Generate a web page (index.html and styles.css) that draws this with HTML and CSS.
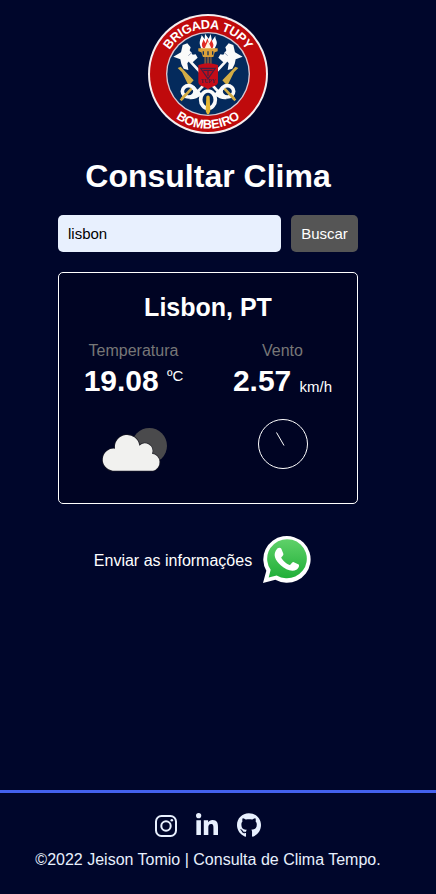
FILE: index.html
```html
<!DOCTYPE html>
<html lang="pt-br">
<head>
<meta charset="utf-8">
<meta name="viewport" content="width=device-width, initial-scale=1">
<title>Consultar Clima</title>
<link rel="stylesheet" href="styles.css">
</head>
<body>
<main class="content">
  <svg class="logo" viewBox="15 18 360 360" role="img" aria-label="Brigada Tupy Bombeiro">
    <defs>
      <path id="arc-top" d="M59 198a136 136 0 0 1 272 0"/>
      <path id="arc-bottom" d="M31 198a164 164 0 0 0 328 0"/>
    </defs>
    <circle cx="195" cy="198" r="180" fill="#f4eef0"/>
    <circle cx="195" cy="198" r="174" fill="#bf0a0c"/>
    <circle cx="195" cy="198" r="126" fill="#d9c9d2"/>
    <circle cx="195" cy="198" r="122" fill="#042a5c"/>
    <text class="logo-text"><textPath href="#arc-top" startOffset="50%" textLength="276">BRIGADA TUPY</textPath></text>
    <text class="logo-text"><textPath href="#arc-bottom" startOffset="50%" textLength="207">BOMBEIRO</textPath></text>
    <path d="M134 152L238 264M256 152L152 264" stroke="#f7f7f7" stroke-width="8"/>
    <path id="axe" d="M91 146l23-13 5-22 14-5 10 12-3 9 9 13 9-1 6 10-15 14-10-5-6 8 3 20-14-4-7-14-3-14z" fill="#fafafa"/>
    <path d="M299 146l-23-13-5-22-14-5-10 12 3 9-9 13-9-1-6 10 15 14 10-5 6 8-3 20 14-4 7-14 3-14z" fill="#fafafa"/>
    <path d="M136 143l11-10M254 143l-11-10" stroke="#9aa6bd" stroke-width="3"/>
    <path d="M104 180l9-4 39 41-15 16-20-40z" fill="#d3ad45"/>
    <path d="M286 180l-9-4-39 41 15 16 20-40z" fill="#d3ad45"/>
    <path d="M171 111c-3-13 3-18 5-30l9 13 1-17 11 15 6-14 4 20 10-14c-1 12 8 15 3 27l-7 15h-37z" fill="#fff"/>
    <path d="M180 120c-8-13 1-17 1-26l7 12 5-15 6 16 8-14c-2 11 9 14 2 27z" fill="#e02b25"/>
    <path d="M185 121l10-22 10 22z" fill="#fff3df"/>
    <path d="M166 121h58v9l-9 3-4 14h-31l-5-14-9-3z" fill="#dca13a"/>
    <path d="M181 130v10M195 130v12M209 130v10" stroke="#12315c" stroke-width="4"/>
    <path d="M184 147h22v22h-22z" fill="#7a5940"/>
    <path d="M191 147v22M200 147v22" stroke="#162c55" stroke-width="3"/>
    <path d="M113 277l36-39M277 277l-36-39" stroke="#d3ad45" stroke-width="8"/>
    <g fill="none" stroke="#fafafa" stroke-width="11">
      <ellipse cx="137" cy="250" rx="19" ry="17"/>
      <ellipse cx="253" cy="250" rx="19" ry="17"/>
      <ellipse cx="195" cy="275" rx="22" ry="26"/>
      <path d="M150 239l22 22M240 239l-22 22M140 268q16 2 32-11M250 268q-16 2-32-11"/>
    </g>
    <path d="M117 272l13-14M273 272l-13-14" stroke="#d3ad45" stroke-width="8"/>
    <path d="M190 266q5-7 10 0l2 43q-7 21-14 0z" fill="#e5b633"/>
    <path d="M166 171q29-10 59 0v52c0 12-24 13-30 22-6-9-29-10-29-22z" fill="#c40c18"/>
    <path d="M173 181h44l-22 31zM181 187h28M195 187v17" fill="none" stroke="#442044" stroke-width="3.5"/>
    <text class="shield-text" x="195" y="224" textLength="45">TUPY</text>
  </svg>

  <h1 class="title">Consultar Clima</h1>

  <form class="search">
    <input class="search-input" type="text" value="lisbon" aria-label="Cidade">
    <button class="search-button" type="button">Buscar</button>
  </form>

  <section class="card">
    <h2 class="city">Lisbon, PT</h2>
    <div class="readings">
      <div class="reading">
        <p class="label">Temperatura</p>
        <p class="value">19.08 <span class="unit unit-top">ºC</span></p>
        <svg class="cloud" viewBox="0 0 240 195" aria-hidden="true">
          <circle cx="163" cy="92" r="53" fill="#4a4a4c"/>
          <path d="M53 167a33 33 0 0 1 7-66a36 36 0 0 1 73-9a23 23 0 0 1 38 24a26 26 0 0 1 3 51z" fill="none" stroke="#1d1d25" stroke-width="5" stroke-opacity=".75"/>
          <path d="M53 167a33 33 0 0 1 7-66a36 36 0 0 1 73-9a23 23 0 0 1 38 24a26 26 0 0 1 3 51z" fill="#f1f1ef"/>
        </svg>
      </div>
      <div class="reading">
        <p class="label">Vento</p>
        <p class="value">2.57 <span class="unit unit-base">km/h</span></p>
        <svg class="compass" viewBox="0 0 50 50" fill="none" stroke="#fff" aria-hidden="true">
          <circle cx="25" cy="25" r="24.5"/>
          <path d="M18.5 13.5l7.5 13"/>
        </svg>
      </div>
    </div>
  </section>

  <div class="share">
    <span class="share-text">Enviar as informações</span>
    <svg class="whatsapp" viewBox="39 29 144 146" preserveAspectRatio="none" aria-hidden="true">
      <defs><linearGradient id="green" x2="0" y2="1"><stop stop-color="#5fd169"/><stop offset="1" stop-color="#20af38"/></linearGradient></defs>
      <path d="M39 175l10-37A71 71 0 1 1 76 165z" fill="#fff"/>
      <path d="M56 158l6-23A59.500 59.500 0 1 1 80 152z" fill="url(#green)"/>
      <path d="M82 70c4-3 10-3 12 1l6 15c1 3-1 6-6 11-2 2 11 19 25 23 3 1 7-10 11-9l16 8c3 2 0 13-7 16-14 7-33-1-46-13-17-16-27-34-11-52z" fill="#fff"/>
    </svg>
  </div>
</main>

<footer class="footer">
  <div class="social">
    <svg class="instagram" viewBox="0 0 22 22" fill="none" stroke="#e8f0fe" stroke-width="2" aria-hidden="true">
      <rect x="1" y="1" width="20" height="20" rx="5.500"/>
      <circle cx="11" cy="11" r="4.700"/>
      <circle cx="16.800" cy="5.200" r="1.300" fill="#e8f0fe" stroke="none"/>
    </svg>
    <svg class="linkedin" viewBox="0 0 448 448" fill="#e8f0fe" aria-hidden="true">
      <path d="M100.280 448H7.400V148.900h92.880zM53.790 108.100C24.090 108.100 0 83.500 0 53.800a53.790 53.790 0 0 1 107.580 0c0 29.700-24.100 54.300-53.790 54.300zM447.900 448h-92.680V302.400c0-34.700-.7-79.200-48.290-79.200-48.290 0-55.690 37.700-55.690 76.700V448h-92.780V148.900h89.080v40.800h1.300c12.400-23.500 42.690-48.300 87.880-48.300 94 0 111.280 61.900 111.280 142.300V448z"/>
    </svg>
    <svg class="github" viewBox="0 8 496 484" fill="#e8f0fe" aria-hidden="true">
      <path d="M165.900 397.400c0 2-2.300 3.600-5.200 3.600-3.300.3-5.600-1.300-5.600-3.600 0-2 2.300-3.600 5.200-3.600 3-.3 5.600 1.300 5.600 3.600zm-31.100-4.500c-.7 2 1.300 4.300 4.300 4.900 2.600 1 5.600 0 6.200-2s-1.300-4.300-4.300-5.200c-2.600-.7-5.500.3-6.200 2.300zm44.200-1.700c-2.900.7-4.900 2.600-4.600 4.900.3 2 2.900 3.300 5.900 2.600 2.900-.7 4.900-2.600 4.600-4.600-.3-1.900-3-3.200-5.900-2.900zM244.800 8C106.100 8 0 113.300 0 252c0 110.900 69.800 205.800 169.500 239.200 12.800 2.300 17.300-5.600 17.300-12.100 0-6.200-.3-40.400-.3-61.400 0 0-70 15-84.700-29.800 0 0-11.400-29.100-27.800-36.600 0 0-22.900-15.700 1.600-15.400 0 0 24.900 2 38.600 25.800 21.900 38.600 58.600 27.500 72.900 20.900 2.300-16 8.800-27.100 16-33.700-55.900-6.200-112.300-14.300-112.300-110.500 0-27.500 7.600-41.300 23.600-58.900-2.600-6.500-11.100-33.300 2.600-67.900 20.900-6.500 69 27 69 27 20-5.600 41.500-8.500 62.800-8.500s42.800 2.900 62.800 8.500c0 0 48.100-33.600 69-27 13.700 34.700 5.200 61.400 2.600 67.900 16 17.700 25.800 31.500 25.800 58.900 0 96.500-58.900 104.200-114.800 110.500 9.200 7.900 17 22.900 17 46.400 0 33.700-.3 75.400-.3 83.600 0 6.500 4.600 14.400 17.300 12.100C428.200 457.800 496 362.900 496 252 496 113.300 383.500 8 244.800 8z"/>
    </svg>
  </div>
  <p class="copyright">©2022 Jeison Tomio | Consulta de Clima Tempo.</p>
</footer>
</body>
</html>
```

FILE: styles.css
```css
* {
  box-sizing: border-box;
  margin: 0;
  padding: 0;
}

body {
  display: flex;
  flex-direction: column;
  min-height: 894px;
  background: #00062b;
  color: #fff;
  font: 16px/18px "Liberation Sans", Arial, sans-serif;
}

svg {
  display: block;
  flex: none;
}

.content {
  display: flex;
  flex: 1;
  flex-direction: column;
  align-items: center;
  padding: 14px 20px 0 0;
}

.logo {
  width: 120px;
  height: 120px;
}

.logo-text {
  fill: #fff;
  font-size: 38px;
  font-weight: bold;
  text-anchor: middle;
}

.shield-text {
  fill: #442044;
  font: bold 17px "Liberation Serif", serif;
  text-anchor: middle;
}

.title {
  margin-top: 24px;
  font-size: 32px;
  line-height: 37px;
}

.search {
  display: flex;
  gap: 10px;
  width: 300px;
  height: 37px;
  margin-top: 20px;
}

.search-input,
.search-button {
  border: 0;
  border-radius: 5px;
  font: inherit;
  font-size: 15px;
}

.search-input {
  flex: 1;
  min-width: 0;
  padding: 0 10px;
  background: #e8f0fe;
  color: #000;
}

.search-button {
  width: 67px;
  background: #555;
  color: #fff;
}

.card {
  width: 300px;
  height: 232px;
  margin-top: 20px;
  padding: 20px 0 0;
  border: 1px solid #fff;
  border-radius: 5px;
  background: #000423;
}

.city {
  font-size: 25px;
  line-height: 29px;
  text-align: center;
}

.readings {
  display: grid;
  grid-template-columns: 1fr 1fr;
  margin-top: 20px;
}

.reading {
  display: flex;
  flex-direction: column;
  align-items: center;
}

.label {
  color: #777;
}

.value {
  margin-top: 4px;
  font-size: 30px;
  font-weight: bold;
  line-height: 34px;
  white-space: nowrap;
}

.unit {
  position: relative;
  font-size: 15px;
  font-weight: normal;
  line-height: 1;
}

.unit-top {
  top: -10px;
}

.unit-base {
  top: 1px;
}

.cloud {
  width: 80px;
  height: 65px;
  margin-top: 17px;
  margin-left: 2px;
}

.compass {
  width: 50px;
  height: 50px;
  margin-top: 21px;
}

.share {
  display: flex;
  align-items: center;
  gap: 11px;
  margin: 31px 11px 0 0;
}

.share-text {
  padding-top: 3px;
}

.whatsapp {
  width: 48px;
  height: 48px;
}

.footer {
  height: 104px;
  padding: 20px 20px 0 0;
  border-top: 3px solid #4361ee;
}

.social {
  display: flex;
  align-items: center;
  justify-content: center;
  gap: 19px;
  height: 24px;
}

.instagram,
.linkedin {
  width: 22px;
  height: 22px;
}

.linkedin {
  margin-bottom: 2px;
}

.instagram {
  margin-top: 2px;
}

.github {
  width: 24px;
  height: 24px;
}

.copyright {
  margin-top: 14px;
  text-align: center;
  color: #e8f0fe;
}
```
